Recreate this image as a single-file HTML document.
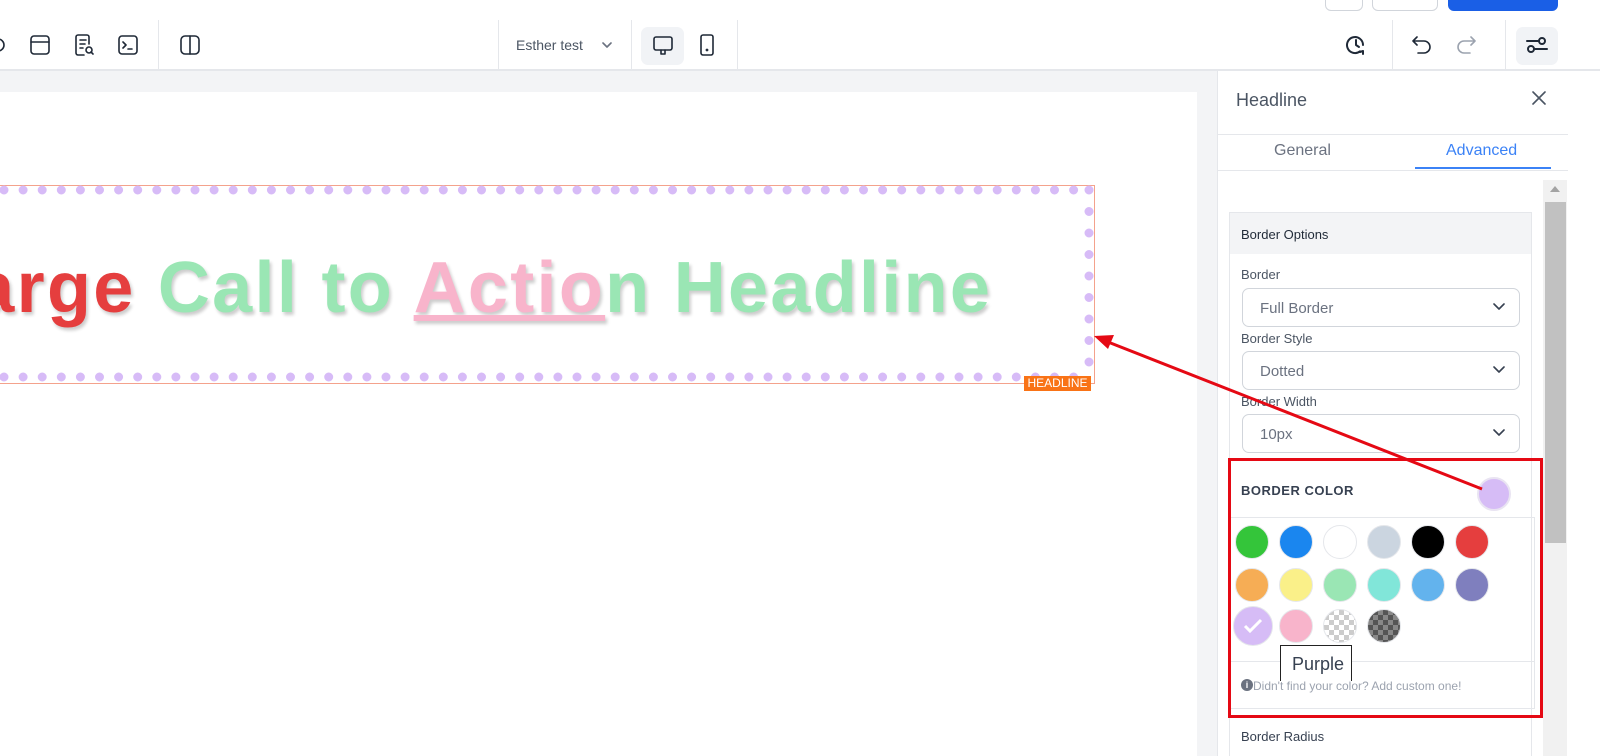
<!DOCTYPE html>
<html><head><meta charset="utf-8"><style>
*{box-sizing:border-box;margin:0;padding:0}
body{width:1600px;height:756px;overflow:hidden;background:#fff;font-family:"Liberation Sans",sans-serif;position:relative}
.a{position:absolute}
.sep{position:absolute;top:20px;width:1px;height:50px;background:#e5e7eb}
.ico{position:absolute;stroke:#1f2937;fill:none;stroke-width:1.6;stroke-linecap:round;stroke-linejoin:round}
.lbl{position:absolute;left:1241px;font-size:13px;color:#4b5563}
.sel{position:absolute;left:1242px;width:278px;height:39px;border:1px solid #d1d5db;border-radius:7px;font-size:15px;color:#6b7280;padding:11px 0 0 17px}
.sel svg{position:absolute;right:14px;top:14px}
.c{position:absolute;width:34px;height:34px;border-radius:50%;border:1px solid #e5e7eb}
.w{position:absolute;top:248px;left:-72px;font-size:72px;font-weight:bold;white-space:nowrap;text-shadow:2px 3px 3px rgba(0,0,0,.2);letter-spacing:2.3px;line-height:80px}
</style></head><body>
<div class="a" style="left:1325px;top:-10px;width:38px;height:21px;border:1px solid #d1d5db;border-radius:6px"></div>
<div class="a" style="left:1372px;top:-10px;width:66px;height:21px;border:1px solid #d1d5db;border-radius:6px"></div>
<div class="a" style="left:1448px;top:-10px;width:110px;height:21px;background:#1a5fe6;border-radius:6px"></div>
<div class="a" style="left:0;top:69px;width:1600px;height:2px;background:#e5e7eb"></div>
<svg class="ico" style="left:-8px;top:35px" width="16" height="20" viewBox="0 0 16 20"><circle cx="6" cy="10" r="6"/></svg>
<svg class="ico" style="left:30px;top:35px" width="20" height="20"><rect x="1" y="1" width="18" height="18" rx="3"/><line x1="1" y1="7" x2="19" y2="7"/></svg>
<svg class="ico" style="left:75px;top:34px" width="20" height="22"><path d="M14 10V3a2 2 0 0 0-2-2H3a2 2 0 0 0-2 2v16a2 2 0 0 0 2 2h6M5 6h6M5 10h5M5 14h3"/><circle cx="14" cy="16" r="3"/><path d="M16 18l2 2"/></svg>
<svg class="ico" style="left:118px;top:35px" width="20" height="20"><rect x="1" y="1" width="18" height="18" rx="3"/><path d="M5 7l3 3-3 3M10 14h4"/></svg>
<div class="sep" style="left:158px"></div>
<svg class="ico" style="left:180px;top:35px" width="20" height="20"><rect x="1" y="1" width="18" height="18" rx="4"/><line x1="10" y1="1" x2="10" y2="19"/></svg>
<div class="sep" style="left:498px"></div>
<div class="a" style="left:516px;top:37px;font-size:14px;color:#4b5563">Esther test</div>
<svg class="ico" style="left:602px;top:41px;stroke:#6b7280" width="10" height="8"><path d="M1 2l4 4 4-4"/></svg>
<div class="sep" style="left:631px"></div>
<div class="a" style="left:641px;top:27px;width:43px;height:38px;background:#f1f3f6;border-radius:7px"></div>
<svg class="ico" style="left:653px;top:36px" width="20" height="20"><rect x="1" y="1" width="18" height="13" rx="2"/><path d="M8 14v4h4v-4"/></svg>
<svg class="ico" style="left:699px;top:34px" width="16" height="22"><rect x="2" y="1" width="12" height="20" rx="2"/><circle cx="8" cy="16" r=".6"/></svg>
<div class="sep" style="left:737px"></div>
<svg class="ico" style="left:1345px;top:34px;stroke-width:2" width="22" height="22"><path d="M18 11a8 8 0 1 0-3 6.3"/><path d="M11 6v5l3 2M15 18l3-1 0 3"/></svg>
<div class="sep" style="left:1392px"></div>
<svg class="ico" style="left:1412px;top:35px" width="20" height="20"><path d="M5 2L1 6l4 4M1 6h11a6 6 0 0 1 0 12H6"/></svg>
<svg class="ico" style="left:1456px;top:35px;stroke:#9ca3af" width="20" height="20"><path d="M15 2l4 4-4 4M19 6H8a6 6 0 0 0 0 12h6"/></svg>
<div class="sep" style="left:1505px"></div>
<div class="a" style="left:1516px;top:27px;width:42px;height:38px;background:#f1f3f6;border-radius:7px"></div>
<svg class="ico" style="left:1526px;top:36px;stroke-width:2" width="22" height="18"><circle cx="16" cy="5" r="3"/><path d="M1 5h12M9 13h12"/><circle cx="5" cy="13" r="3"/></svg>
<div class="a" style="left:0;top:71px;width:1217px;height:685px;background:#f3f4f6"></div>
<div class="a" style="left:0;top:92px;width:1197px;height:664px;background:#fff"></div>
<div class="a" style="left:-10px;top:185px;width:1105px;height:199px;border:1px solid #f4a28c"></div>
<svg class="a" style="left:0;top:185px" width="1100" height="200">
<line x1="4" y1="5" x2="1090" y2="5" stroke="#d7bbf7" stroke-width="9" stroke-linecap="round" stroke-dasharray="0 19.1"/>
<line x1="4" y1="192" x2="1090" y2="192" stroke="#d7bbf7" stroke-width="9" stroke-linecap="round" stroke-dasharray="0 19.1"/>
<line x1="1089" y1="5" x2="1089" y2="192" stroke="#d7bbf7" stroke-width="9" stroke-linecap="round" stroke-dasharray="0 21.5"/>
</svg>
<div class="w"><span style="color:#e53e3e">Large</span> <span style="color:#9ae6b4">Call to</span> <span style="color:#f8b4cb;text-decoration:underline;text-decoration-thickness:6px">Actio</span><span style="color:#9ae6b4">n Headline</span></div>
<div class="a" style="left:1024px;top:376px;width:67px;height:15px;background:#f97316;color:#fff;font-size:12px;text-align:center;line-height:15px">HEADLINE</div>
<div class="a" style="left:1217px;top:71px;width:383px;height:685px;background:#fff;border-left:1px solid #e5e7eb"></div>
<div class="a" style="left:1236px;top:90px;font-size:18px;color:#4b5563">Headline</div>
<svg class="ico" style="left:1532px;top:91px;stroke:#4b5563" width="14" height="14"><path d="M1 1l12 12M13 1L1 13"/></svg>
<div class="a" style="left:1218px;top:134px;width:350px;height:1px;background:#e5e7eb"></div>
<div class="a" style="left:1274px;top:142px;font-size:16px;color:#6b7280">General</div>
<div class="a" style="left:1446px;top:142px;font-size:16px;color:#3b82f6">Advanced</div>
<div class="a" style="left:1218px;top:170px;width:350px;height:1px;background:#e5e7eb"></div>
<div class="a" style="left:1415px;top:167px;width:136px;height:2px;background:#3b82f6"></div>
<div class="a" style="left:1543px;top:180px;width:24px;height:576px;background:#f1f1f1"></div>
<div class="a" style="left:1545px;top:202px;width:21px;height:341px;background:#c1c1c1"></div>
<div class="a" style="left:1550px;top:186px;width:0;height:0;border:5px solid transparent;border-bottom:6px solid #a3a3a3;border-top:0"></div>
<div class="a" style="left:1229px;top:212px;width:303px;height:544px;border:1px solid #e5e7eb;border-bottom:0"></div>
<div class="a" style="left:1230px;top:213px;width:301px;height:41px;background:#f3f4f6"></div>
<div class="a" style="left:1241px;top:227px;font-size:13px;color:#1f2937">Border Options</div>
<div class="lbl" style="top:267px">Border</div>
<div class="sel" style="top:288px">Full Border<svg class="ico" style="stroke:#374151" width="12" height="8"><path d="M1 1l5 5 5-5"/></svg></div>
<div class="lbl" style="top:331px">Border Style</div>
<div class="sel" style="top:351px">Dotted<svg class="ico" style="stroke:#374151" width="12" height="8"><path d="M1 1l5 5 5-5"/></svg></div>
<div class="lbl" style="top:394px">Border Width</div>
<div class="sel" style="top:414px">10px<svg class="ico" style="stroke:#374151" width="12" height="8"><path d="M1 1l5 5 5-5"/></svg></div>
<div class="a" style="left:1241px;top:483px;font-size:13px;font-weight:bold;color:#374151;letter-spacing:.5px">BORDER COLOR</div>
<div class="a" style="left:1477px;top:477px;width:34px;height:34px;border-radius:50%;background:#d6bcf6;border:2px solid #e9e4f2"></div>
<div class="a" style="left:1229px;top:517px;width:306px;height:192px;border:1px solid #e5e7eb"></div>
<div class="a" style="left:1230px;top:661px;width:304px;height:1px;background:#e5e7eb"></div>
<div class="c" style="left:1235px;top:525px;background:#34c53a"></div>
<div class="c" style="left:1279px;top:525px;background:#1a86ef"></div>
<div class="c" style="left:1323px;top:525px;background:#fff"></div>
<div class="c" style="left:1367px;top:525px;background:#cbd5e0"></div>
<div class="c" style="left:1411px;top:525px;background:#000"></div>
<div class="c" style="left:1455px;top:525px;background:#e53e3e"></div>
<div class="c" style="left:1235px;top:568px;background:#f6ad55"></div>
<div class="c" style="left:1279px;top:568px;background:#faf089"></div>
<div class="c" style="left:1323px;top:568px;background:#9ae6b4"></div>
<div class="c" style="left:1367px;top:568px;background:#81e6d9"></div>
<div class="c" style="left:1411px;top:568px;background:#63b3ed"></div>
<div class="c" style="left:1455px;top:568px;background:#7f7fbe"></div>
<div class="c" style="left:1233px;top:606px;width:40px;height:40px;background:#d6bcf6"></div>
<svg class="a" style="left:1243px;top:617px" width="20" height="18"><path d="M2 9l5 5 11-11" stroke="#fff" stroke-width="3" fill="none"/></svg>
<div class="c" style="left:1279px;top:609px;background:#f8b4cb"></div>
<div class="c" style="left:1323px;top:609px;background:repeating-conic-gradient(#ccc 0 25%,#fff 0 50%) 0 0/10px 10px"></div>
<div class="c" style="left:1367px;top:609px;background:repeating-conic-gradient(#555 0 25%,#888 0 50%) 0 0/10px 10px"></div>
<div class="a" style="left:1280px;top:645px;width:72px;height:36px;border:1px solid #222;border-bottom:0;background:#fff;font-size:18px;color:#374151;padding:8px 0 0 11px">Purple</div>
<div class="a" style="left:1241px;top:679px;width:12px;height:12px;border-radius:50%;background:#6b7280;color:#fff;font-size:9px;font-weight:bold;text-align:center;line-height:12px">i</div>
<div class="a" style="left:1253px;top:679px;font-size:12px;color:#9ca3af">Didn't find your color? Add custom one!</div>
<div class="a" style="left:1228px;top:458px;width:315px;height:260px;border:3px solid #e50914"></div>
<div class="a" style="left:1241px;top:729px;font-size:13px;color:#374151">Border Radius</div>
<svg class="a" style="left:0;top:0" width="1600" height="756"><line x1="1482" y1="489" x2="1108" y2="342" stroke="#e50914" stroke-width="3"/><path d="M1094 336l20 -1 -6 14z" fill="#e50914"/></svg>
</body></html>
